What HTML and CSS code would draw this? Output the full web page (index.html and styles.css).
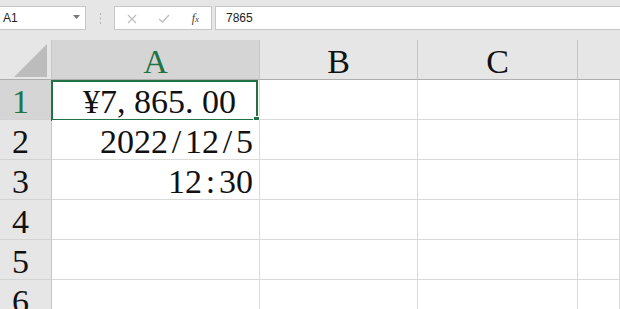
FILE: index.html
```html
<!DOCTYPE html>
<html>
<head>
<meta charset="utf-8">
<title>Sheet1</title>
<link rel="stylesheet" href="styles.css">
</head>
<body>

<div class="formula-bar">
  <div class="name-box">
    <span>A1</span>
    <svg class="drop" width="7" height="4" viewBox="0 0 7 4"><path d="M0 0H7L3.5 4Z" fill="#777"/></svg>
  </div>
  <div class="grip">
    <svg width="3" height="11" viewBox="0 0 3 11"><rect x="1" y="0" width="1" height="2" fill="#b4b4b4"/><rect x="1" y="4.5" width="1" height="2" fill="#b4b4b4"/><rect x="1" y="9" width="1" height="2" fill="#b4b4b4"/></svg>
  </div>
  <div class="fn-box">
    <svg width="10" height="10" viewBox="0 0 10 10"><path d="M1 1L9 9M9 1L1 9" stroke="#bdbdbd" stroke-width="1.2" fill="none"/></svg>
    <svg width="12" height="9" viewBox="0 0 12 9"><path d="M1 5L4.5 8L11 1" stroke="#bdbdbd" stroke-width="1.3" fill="none"/></svg>
    <i class="fx">f<small>x</small></i>
  </div>
  <div class="formula-input">7865</div>
</div>

<div class="sheet">
  <div class="corner">
    <svg width="34" height="33" viewBox="0 0 34 33"><path d="M33 0V33H0Z" fill="#bcbcbc"/></svg>
  </div>
  <div class="col-head active">A</div>
  <div class="col-head">B</div>
  <div class="col-head">C</div>
  <div class="col-head last"></div>

  <div class="row-head active">1</div>
  <div class="cell centered">¥7, 865. 00<div class="sel"><span class="handle"></span></div></div>
  <div class="cell"></div>
  <div class="cell"></div>
  <div class="cell"></div>

  <div class="row-head">2</div>
  <div class="cell">2022<span class="sep">/</span>12<span class="sep">/</span>5</div>
  <div class="cell"></div>
  <div class="cell"></div>
  <div class="cell"></div>

  <div class="row-head">3</div>
  <div class="cell">12<span class="sep">:</span>30</div>
  <div class="cell"></div>
  <div class="cell"></div>
  <div class="cell"></div>

  <div class="row-head">4</div>
  <div class="cell"></div>
  <div class="cell"></div>
  <div class="cell"></div>
  <div class="cell"></div>

  <div class="row-head">5</div>
  <div class="cell"></div>
  <div class="cell"></div>
  <div class="cell"></div>
  <div class="cell"></div>

  <div class="row-head">6</div>
  <div class="cell"></div>
  <div class="cell"></div>
  <div class="cell"></div>
  <div class="cell"></div>
</div>

</body>
</html>
```

FILE: styles.css
```css
html, body {margin:0; padding:0; height:100%; overflow:hidden;}
body {background-color:#e6e6e6; font: 12px "Liberation Sans", Arial, sans-serif; color:#222;}

.formula-bar {display:flex; align-items:stretch; height:24px; padding:6px 0 10px 0;}
.name-box {width:86px; box-sizing:border-box; background:#fff; border:1px solid #c6c6c6; border-left:none; display:flex; align-items:center; justify-content:space-between; padding:0 5px 0 3px;}
.name-box .drop {margin-top:-2px;}
.grip {width:27px; display:flex; align-items:center; justify-content:center; margin-left:1px;}
.fn-box {width:98px; box-sizing:border-box; background:#fff; border:1px solid #c6c6c6; display:flex; align-items:center; justify-content:space-between; padding:1px 12px 0 12px;}
.fx {font: italic 12px "Liberation Serif", serif; color:#444;}
.fx small {font-size:9px;}
.formula-input {flex:1; margin-left:3px; background:#fff; border:1px solid #c6c6c6; border-right:none; display:flex; align-items:center; padding:0 10px;}

.sheet {display:grid; grid-template-columns:52px 208px 158px 160px 1fr; grid-auto-rows:40px; font: 34px "Liberation Serif", "Times New Roman", serif; line-height:30px;}
.sheet > div {box-sizing:border-box;}

.corner, .col-head, .row-head {background:#e6e6e6; color:#111;}
.corner {border-right:1px solid #c6c6c6; border-bottom:1px solid #adadad; display:flex; align-items:flex-end; justify-content:flex-end; padding:0 3px 2px 0;}
.col-head {border-right:1px solid #c6c6c6; border-bottom:1px solid #adadad; display:flex; align-items:flex-end; justify-content:center; padding-bottom:2px;}
.col-head.last {border-right:none;}
.row-head {border-right:1px solid #c6c6c6; border-bottom:1px solid #d2d2d2; display:flex; align-items:flex-end; justify-content:center; padding:0 10px 2px 0;}
.col-head.active, .row-head.active {background:#d5d5d5; color:#217346;}

.cell {background:#fff; border-right:1px solid #dadada; border-bottom:1px solid #dadada; display:flex; align-items:flex-end; justify-content:flex-end; padding:0 6px 2px 0; position:relative; color:#111;}
.cell.centered {justify-content:center; padding:0 0 2px 8px;}
.sep {display:inline-block; width:17px; text-align:center;}

.sel {position:absolute; left:-1px; top:0; right:1px; bottom:-2px; border:2px solid #217346;}
.handle {position:absolute; right:-4px; bottom:-4px; width:5px; height:5px; background:#217346; border:1px solid #fff;}
```
